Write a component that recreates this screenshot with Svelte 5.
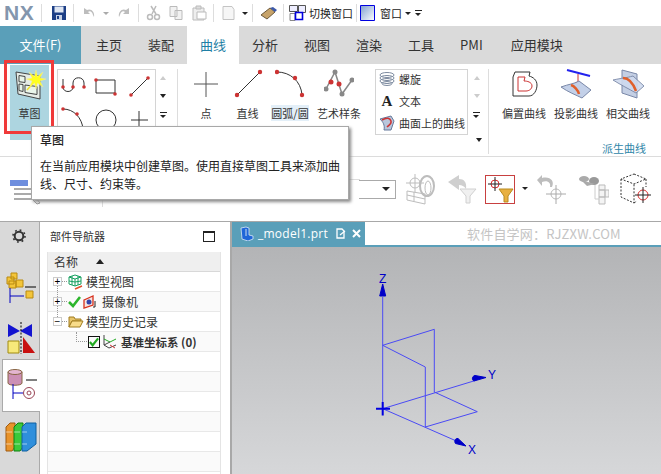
<script>
  const tabs = ['主页','装配','曲线','分析','视图','渲染','工具','PMI','应用模块'];
  const rows = Array.from({length: 10});
</script>

<div class="app">
  <header class="qat">
    <span class="logo">NX</span><i class="sep m4"></i>
    <svg class="m9" width="16" height="16" viewBox="0 0 16 16"><path d="M1 1h14v14H1z" fill="#1d3f86"/><path d="M3.500 1.500h9v6h-9z" fill="#dfe6f2"/><path d="M5 10h6v5H5z" fill="#c9d3e6"/><path d="M6 11h2v3H6z" fill="#1d3f86"/></svg>
    <i class="sep m6"></i>
    <svg class="m7" width="16" height="16" viewBox="0 0 16 16"><path d="M3 3v6h6L7 7c2-1.500 4-.5 5 3l1 2c1-5-3-9-7-7z" fill="#bdbdbd"/></svg>
    <span class="caret light m6"></span>
    <svg class="m7 flip" width="16" height="16" viewBox="0 0 16 16"><path d="M3 3v6h6L7 7c2-1.500 4-.5 5 3l1 2c1-5-3-9-7-7z" fill="#bdbdbd"/></svg>
    <i class="sep m6"></i>
    <svg class="m6" width="16" height="16" viewBox="0 0 16 16"><path d="M11 1 7 9M6 1l5 8" stroke="#bbb" stroke-width="1.500"/><circle cx="5" cy="12" r="2.500" fill="none" stroke="#bbb" stroke-width="1.500"/><circle cx="12" cy="12" r="2.500" fill="none" stroke="#bbb" stroke-width="1.500"/></svg>
    <svg class="m7" width="16" height="16" viewBox="0 0 16 16"><path d="M2 1.500h7v10H2zM7 5.500h7v9H7z" fill="#f2f2f2" stroke="#bbb"/></svg>
    <svg class="m7" width="16" height="16" viewBox="0 0 16 16"><path d="M2 3h11v12H2z" fill="#eee" stroke="#bbb"/><path d="M5 1h5v3H5z" fill="#ddd" stroke="#bbb"/><path d="M6 7h9v7H6z" fill="#fff" stroke="#bbb"/></svg>
    <i class="sep m6"></i>
    <svg class="m6" width="16" height="16" viewBox="0 0 16 16"><path d="M3 1.500h9l2 3v10H3z" fill="#f6f6f6" stroke="#c4c4c4"/></svg>
    <span class="caret m6"></span>
    <i class="sep m4"></i>
    <svg class="m7" width="18" height="14" viewBox="0 0 18 14"><path d="M1 9 10 2l5 4-8 7z" fill="#c7a36a" stroke="#6d5a3c"/><path d="m10 2 3-1 4 3-2 2z" fill="#3d5aa8"/></svg>
    <i class="sep m5"></i>
    <svg class="m5" width="17" height="17" viewBox="0 0 17 17"><path d="M.5.5h8v6h-8zM9.500.5h7v7h-7z" fill="#eef" stroke="#555"/><path d="M1 8.500h5v7H1z" fill="#fff" stroke="#888"/><path d="M6.500 7.500h7v7h-7z" fill="#fff" stroke="#0000e0" stroke-width="1.600"/></svg>
    <span class="qt m3">切换窗口</span>
    <i class="sep m3"></i>
    <svg class="m3" width="15" height="16" viewBox="0 0 15 16"><defs><linearGradient id="win" x1="0" y1="0" x2="1" y2="1"><stop offset="0" stop-color="#7f9fd0"/><stop offset="1" stop-color="#ffffff"/></linearGradient></defs><path d="M.5.500h14v15H.5z" fill="url(#win)" stroke="#0000e0"/></svg>
    <span class="qt m5">窗口</span>
    <span class="caret m3"></span>
    <span class="more m4"></span>
  </header>

  <nav class="tabs">
    <span class="file">文件(F)</span>
    {#each tabs as t}
      <span class="tab" class:active={t === '曲线'}>{t}</span>
    {/each}
  </nav>

  <section class="ribbon">
    <div class="sketch">
      <svg width="32" height="32" viewBox="0 0 32 32"><path d="M2 3 26 7v23L4 25z" fill="#e6ece6" stroke="#444"/><path d="M5 6.500 11 7.500v6l-6-.8zM5 15l4 .5v7L5 21.500zM11 16l12 1.500v8L11 23.500z" fill="#eaf5ea" stroke="#444"/><path d="M13 21 22 11" stroke="#f0e020" stroke-width="1.500"/><path d="m22 1 1.500 6.500L29 3l-3 6 6 1-6 2 3 6-5.500-4-1.500 6-1.500-6-5 4 2.500-6-6-2 6-1-3-6 5.500 4.500z" fill="#ffff20" stroke="#f4e8a0" stroke-width=".5"/></svg>
      <span>草图</span>
    </div>

    <div class="grid">
      <svg viewBox="0 0 33 33"><path d="M5 17c0 6 10 6 10 0v-4c0-7 11-7 11 0v4" fill="none" stroke="#333"/><path d="M5 17V9" stroke="#333"/><circle cx="5" cy="17" r="1.800" fill="#c33"/><circle cx="15" cy="17" r="1.800" fill="#c33"/><circle cx="26" cy="17" r="1.800" fill="#c33"/></svg>
      <svg viewBox="0 0 33 33"><path d="M5 10h19v13H5z" fill="none" stroke="#333"/><circle cx="5" cy="10" r="1.800" fill="#c33"/><circle cx="24" cy="24" r="1.800" fill="#c33"/></svg>
      <svg viewBox="0 0 33 33"><path d="M7 25 24 8" stroke="#333"/><circle cx="7" cy="25" r="1.800" fill="#c33"/><circle cx="24" cy="8" r="1.800" fill="#c33"/></svg>
      <svg viewBox="0 0 33 33"><path d="M5 6c11 0 19 9 20 20" fill="none" stroke="#333"/><circle cx="5" cy="6" r="1.800" fill="#c33"/><circle cx="19" cy="11" r="1.800" fill="#c33"/><circle cx="25" cy="26" r="1.800" fill="#c33"/></svg>
      <svg viewBox="0 0 33 33"><circle cx="15" cy="17" r="10" fill="none" stroke="#333"/></svg>
      <svg viewBox="0 0 33 33"><path d="M15 8v20M7 17h17" stroke="#333"/></svg>
    </div>
    <div class="scroll">
      <span class="up"></span><span class="down"></span><span class="more"></span>
    </div>
    <i class="vsep first"></i>

    <div class="big w42">
      <svg width="30" height="30" viewBox="0 0 30 30"><path d="M15 3v25M3 15h24" stroke="#555"/></svg><span>点</span>
    </div>
    <div class="big w41">
      <svg width="30" height="30" viewBox="0 0 30 30"><path d="M4 26 27 3" stroke="#333"/><circle cx="4" cy="26" r="2.200" fill="#c33"/><circle cx="27" cy="3" r="2.200" fill="#c33"/></svg><span>直线</span>
    </div>
    <div class="big w44">
      <svg width="30" height="30" viewBox="0 0 30 30"><path d="M2 3c13 0 24 9 25 23" fill="none" stroke="#333"/><circle cx="2" cy="3" r="2.200" fill="#c33"/><circle cx="20" cy="9" r="2.200" fill="#c33"/><circle cx="27" cy="26" r="2.200" fill="#c33"/></svg><span class="hl">圆弧/圆</span>
    </div>
    <div class="big w54">
      <svg width="30" height="30" viewBox="0 0 30 30"><path d="M2 20 11 3l7 22 10-14" fill="none" stroke="#888" stroke-width="1.500"/><circle cx="2" cy="20" r="2.500" fill="#888"/><circle cx="11" cy="3" r="2.500" fill="#888"/><circle cx="18" cy="25" r="2.500" fill="#888"/><circle cx="28" cy="11" r="2.500" fill="#888"/><circle cx="7" cy="13" r="2.500" fill="#c33"/><circle cx="15" cy="15" r="2.500" fill="#c33"/></svg><span>艺术样条</span>
    </div>

    <div class="list">
      <div><svg width="16" height="16" viewBox="0 0 16 16"><g fill="none" stroke="#7d8ba0"><ellipse cx="8" cy="4" rx="7" ry="2.500"/><ellipse cx="8" cy="7" rx="7" ry="2.500"/><ellipse cx="8" cy="10" rx="7" ry="2.500"/><ellipse cx="8" cy="12.500" rx="5" ry="2"/></g></svg>螺旋</div>
      <div><span class="glyph">A</span>文本</div>
      <div><svg width="16" height="16" viewBox="0 0 16 16"><path d="M1 4 12 1l3 5-3 9-7 0C6 10 4 7 1 4z" fill="#b9c6dc" stroke="#65799b"/><path d="M3 5c5-3 8-2 9 1s-2 4-4 6" fill="none" stroke="#c33" stroke-width="1.500"/></svg>曲面上的曲线</div>
    </div>
    <div class="scroll second">
      <span class="up"></span><span class="down lt"></span><span class="more"></span><span class="down end"></span>
    </div>
    <i class="vsep"></i>

    <div class="derived">
      <div class="row">
        <div class="big w52">
          <svg width="30" height="30" viewBox="0 0 30 30"><path d="M6 3h15l-1 4c4 1 8 4 8 9 0 5-3 11-8 11H4V8z" fill="#fff" stroke="#333"/><path d="M9 8h7l-1 4c3 0 8 1 8 5 0 3-3 5-6 5H9z" fill="none" stroke="#c33"/></svg><span>偏置曲线</span>
        </div>
        <div class="big w52">
          <svg width="32" height="30" viewBox="0 0 32 30"><path d="M7 1 30 7" stroke="#2222ee" stroke-width="2"/><path d="M18 5v12" stroke="#c33"/><path d="m15 13 3 5 3-5z" fill="#c33"/><path d="M1 18C9 15 14 15 19 12l12 9-9 8C16 26 8 23 1 18z" fill="#c3d0e8" stroke="#7a88a8"/><path d="M11 16c3 1 7 5 8 9" fill="none" stroke="#e0602c" stroke-width="2.500"/></svg><span>投影曲线</span>
        </div>
        <div class="big w52">
          <svg width="32" height="30" viewBox="0 0 32 30"><path d="M10 1 25 5v24L10 24z" fill="#c4cfe4" stroke="#7a88a8"/><path d="M1 11C10 9 14 9 21 7l11 10-8 7C17 20 9 16 1 11z" fill="#cfdaee" stroke="#7a88a8" opacity=".9"/><path d="M11 9c5 0 10 5 13 13" fill="none" stroke="#e0602c" stroke-width="2.500"/></svg><span>相交曲线</span>
        </div>
      </div>
      <span class="group">派生曲线</span>
    </div>
  </section>

  <section class="selbar">
    <svg class="selicon" width="32" height="28" viewBox="0 0 32 28"><path d="M0 1h18v6H0z" fill="#6e8ede"/><path d="M4 10h18M4 15h18M4 20h18" stroke="#aaa" stroke-width="2"/><path d="m24 9 2 10 4 5-3 1-5-5z" fill="#f2f2f2" stroke="#999"/></svg>
    <i class="bar"></i>
    <div class="rule"></div>
    <div class="combo"><span class="caret dark"></span></div>
    <svg class="s1" width="33" height="32" viewBox="0 0 33 32" fill="none" stroke="#bdbdbd"><circle cx="11" cy="10" r="5"/><path d="M11 1v18M2 10h18M3 18l18 3v10L3 27zM10 19v9M3 22l18 4" /><ellipse cx="23" cy="13" rx="7" ry="10" stroke-width="2"/><ellipse cx="24" cy="15" rx="3" ry="7"/></svg>
    <svg class="s2" width="30" height="31" viewBox="0 0 30 31"><path d="M1 8 12 1v4c5 0 8 3 7 10-2-3-4-4-7-4v5z" fill="#cfcfcf"/><path d="M13 15h16l-6 7v7h-4v-7z" fill="#f0f0f0" stroke="#d0d0d0"/></svg>
    <div class="filter"><svg width="28" height="27" viewBox="0 0 28 27"><circle cx="9" cy="8" r="4" fill="none" stroke="#d33"/><path d="M9 1v14M2 8h14" stroke="#222"/><path d="M13 13h14l-5 7v6h-4v-6z" fill="#e8b040" stroke="#b88a20"/></svg></div>
    <span class="caret dark small"></span>
    <svg class="s3" width="32" height="31" viewBox="0 0 32 31"><path d="M16 13c3-6-2-11-10-9V1L1 6l5 6V8c6-2 9 1 8 5z" fill="#bdbdbd"/><circle cx="20" cy="20" r="5" fill="none" stroke="#bbb"/><path d="M20 11v19M10 20h20" stroke="#aaa"/></svg>
    <svg class="s4" width="30" height="31" viewBox="0 0 30 31"><ellipse cx="5" cy="5" rx="5" ry="3" fill="#aaa"/><ellipse cx="15" cy="7" rx="5" ry="4" fill="#999"/><path d="M2 6l6 6 8-2" fill="#aaa"/><path d="M20 11h6v5h-6zM20 16h6v7h-6zM20 23h6v7h-6zM26 16h4v7h-4z" fill="#f4f4f4" stroke="#bbb"/><path d="M16 11v14h4" fill="none" stroke="#ccc"/></svg>
    <svg class="s5" width="34" height="32" viewBox="0 0 34 32"><path d="M15 1 27 6 15 11 2 6zM2 6v18l13 6V11M27 6v8M15 30l3-2" fill="none" stroke="#333" stroke-dasharray="2 1.500"/><circle cx="24" cy="22" r="5" fill="none" stroke="#d33"/><path d="M24 14v16M16 22h16" stroke="#222"/></svg>
  </section>

  <main class="lower">
    <aside class="strip">
      <svg class="gear" width="14" height="14" viewBox="0 0 14 14"><circle cx="7" cy="7" r="4.300" fill="none" stroke="#333" stroke-width="2"/><circle cx="7" cy="7" r="6" fill="none" stroke="#333" stroke-width="1.600" stroke-dasharray="1.800 2.900"/></svg>
      <div class="side s-a"><svg width="30" height="32" viewBox="0 0 30 32"><g fill="#f3c53a" stroke="#b98a10"><path d="M1 5h7v7H1zM5 1h6v6H5zM10 8h7v7h-7zM3 9h7v7H3z"/><path d="M20 19h7v7h-7z"/></g><path d="M4 16v15M4 24h14" stroke="#0000c0" fill="none"/><path d="M19 15h11" stroke="#000"/></svg></div>
      <div class="side s-b"><svg width="28" height="32" viewBox="0 0 28 32"><path d="M1 2 13 9 1 15zM25 2 13 9l12 6z" fill="#1414d0"/><path d="M1 19h11v12H1z" fill="#f7e97a" stroke="#a08a10"/><path d="M16 15 28 31H16z" fill="#c81010"/><path d="M14 0v32" stroke="#000" stroke-dasharray="2 1.500"/></svg></div>
      <div class="side s-c"><svg width="30" height="32" viewBox="0 0 30 32"><path d="M1 3h14v11c0 3-14 3-14 0z" fill="#cc8fb5" stroke="#864"/><ellipse cx="8" cy="3" rx="7" ry="2.500" fill="#e4b5d0" stroke="#864"/><path d="M19 11h11" stroke="#000"/><path d="M6 15v15M6 24h10" stroke="#0000c0" fill="none"/><circle cx="22" cy="24" r="5.500" fill="none" stroke="#945"/><circle cx="22" cy="24" r="2" fill="none" stroke="#945"/></svg></div>
      <div class="side s-d"><svg width="32" height="30" viewBox="0 0 32 30"><path d="M1 5 5 1h5v24l-3 4H1z" fill="#e8932a" stroke="#a05a10"/><path d="M9 5l4-4h5v24l-3 4H9z" fill="#3bc93b" stroke="#108010"/><path d="M17 5l4-4h10v21l-9 7h-5z" fill="#2f8fdc" stroke="#1060a0"/><path d="M1 10h6M1 22h6M9 10h6M9 22h6M17 10h5M17 22h5" stroke="#fff8"/></svg></div>
    </aside>

    <section class="nav">
      <div class="navhead"><span>部件导航器</span><i class="winbtn"></i></div>
      <div class="table">
        <div class="th"><span>名称</span><i class="sort"></i></div>
        <div class="tr">
          <i class="exp link">+</i><span class="dots"></span>
          <svg width="16" height="16" viewBox="0 0 16 16" fill="none" stroke="#18a060"><path d="M7 1 13 3v7l-6 2-6-2V3zM1 3l6 2 6-2M7 5v7M1 7l6 1 6-1M4 2v9M10 2v9"/><path d="m7 15 7-3" stroke="#e0502c" stroke-width="1.500"/></svg>
          <span class="lb">模型视图</span>
        </div>
        <div class="tr">
          <i class="exp link">+</i><span class="dots"></span>
          <svg class="chk" width="13" height="12" viewBox="0 0 13 12"><path d="M1 6 5 10 12 1" fill="none" stroke="#2bb52b" stroke-width="2.600"/></svg>
          <svg class="cam" width="15" height="14" viewBox="0 0 15 14"><path d="M1 5 10 1v9L1 13z" fill="#f4e4e0" stroke="#d8301c" stroke-width="1.300"/><circle cx="6" cy="7" r="2.500" fill="#3344aa"/><path d="M12 6v6h-2" stroke="#222" fill="none"/></svg>
          <span class="lb cam-l">摄像机</span>
        </div>
        <div class="tr">
          <i class="exp">−</i><span class="dots"></span>
          <svg width="16" height="13" viewBox="0 0 16 13"><path d="M1 12V2h5l1 2h6v2H4z" fill="#e8c56a" stroke="#a07c20"/><path d="M4 6h11l-3 6H1z" fill="#f8dc8a" stroke="#a07c20"/></svg>
          <span class="lb">模型历史记录</span>
        </div>
        <div class="tr leaf">
          <span class="elbow"></span>
          <span class="cb"><svg width="11" height="10" viewBox="0 0 11 10"><path d="M1 5 4 8.500 10 1" fill="none" stroke="#22aa22" stroke-width="2.400"/></svg></span>
          <svg class="csys" width="15" height="15" viewBox="0 0 15 15" fill="none"><path d="M1 1v10l5 3 7-3" stroke="#444"/><path d="M1 5l6 3 6-3" stroke="#2a2"/><path d="m7 11 5 3" stroke="#c33"/><path d="M1 11 7 8" stroke="#444"/></svg>
          <b>基准坐标系 (0)</b>
        </div>
        {#each rows as _}<div class="tr"></div>{/each}
      </div>
    </section>

    <section class="gfx">
      <div class="gtabs">
        <div class="gtab">
          <svg width="15" height="15" viewBox="0 0 15 15"><path d="M2 2 7 1l3 1v7l4 1v3l-5 2-6-2z" fill="#1f66d8" stroke="#d8e8f8" stroke-width=".8"/><path d="M7 3v7" stroke="#cde" /></svg>
          <span class="fname">_model1.prt</span>
          <svg width="10" height="11" viewBox="0 0 10 11" class="save"><path d="M1 1h5l2 2v7H1z" fill="none" stroke="#fff" stroke-width="1.300"/><path d="M4 7 9 3" stroke="#fff" stroke-width="1.300"/></svg>
          <svg width="9" height="9" viewBox="0 0 9 9" class="x"><path d="m1 1 7 7M8 1 1 8" stroke="#fff" stroke-width="2"/></svg>
        </div>
        <span class="wm">软件自学网：RJZXW.COM</span>
      </div>
      <div class="canvas">
        <svg width="430" height="229" viewBox="231 245 430 229" fill="none" stroke="#4a4af5">
          <path d="M381.700 406.700V295M381.700 343.300l51.600-16v63M381.700 343.300l42.600 21.700v60M381.700 406.700l92-28M381.700 406.700l73 32M433.300 390l43 19.700-52 15.300" stroke-width="1"/>
          <path d="M375 406.700h14M381.700 400v13.500" stroke="#0000e0" stroke-width="2"/>
          <path d="m381.700 282-3 12h6z" fill="#0000c8" stroke="#0000c8"/>
          <path d="M485 375.500 474 373.500c-3 .5-3.500 4.500-1 5.500z" fill="#0000c8" stroke="#0000c8"/>
          <path d="M465 444 457 436.500c-3-.5-4 3-2.500 5z" fill="#0000c8" stroke="#0000c8"/>
          <text x="378" y="281" class="ax">Z</text>
          <text x="487" y="377" class="ax">Y</text>
          <text x="467" y="452" class="ax">X</text>
        </svg>
      </div>
    </section>
  </main>

  <div class="marker"></div>
  <div class="tip">
    <strong>草图</strong>
    <p>在当前应用模块中创建草图。使用直接草图工具来添加曲线、尺寸、约束等。</p>
  </div>
</div>

<style>
  :global(body) { margin: 0; background: #fff; overflow: hidden; }
  .app { position: relative; width: 661px; height: 474px; overflow: hidden; display: flex; flex-direction: column;
    font-family: "Noto Sans CJK SC", "Open Sans", sans-serif; color: #333; font-size: 11px; }
  i { display: block; font-style: normal; }

  .qat { height: 26px; display: flex; align-items: center; padding-left: 4px; box-sizing: border-box; flex: none; }
  .qat svg { flex: none; }
  .m3 { margin-left: 3px; } .m4 { margin-left: 4px; } .m5 { margin-left: 5px; } .m6 { margin-left: 6px; } .m7 { margin-left: 7px; } .m9 { margin-left: 9px; }
  .logo { font: 700 21px "Liberation Sans", sans-serif; color: #8396ad; width: 33px; letter-spacing: .5px; }
  .sep { width: 1px; height: 18px; background: #ddd; flex: none; }
  .flip { transform: scaleX(-1); }
  .qt { font-size: 11px; color: #222; white-space: nowrap; }
  .caret { width: 0; height: 0; border: 3px solid transparent; border-top: 3px solid #222; border-bottom: 0; flex: none; }
  .caret.light { border-top-color: #aaa; }
  .more { width: 7px; height: 5px; border-top: 1px solid #222; position: relative; display: block; flex: none; }
  .more::after { content: ""; position: absolute; left: 0; top: 2px; width: 0; height: 0; border: 3.500px solid transparent; border-top: 3px solid #222; border-bottom: 0; }

  .tabs { height: 38px; background: #dadada; display: flex; align-items: center; flex: none; }
  .file { width: 81px; height: 38px; background: #5a9fb9; color: #fff; font-size: 13px; line-height: 38px; text-align: center; margin-right: 2px; }
  .tab { padding: 0 13px; font-size: 13px; line-height: 38px; color: #333; }
  .tab:last-child { margin-left: 2px; }
  .tab.active { background: #fff; color: #1f7fa5; }

  .ribbon { height: 93px; box-sizing: border-box; flex: none; display: flex; align-items: flex-start; padding: 1px 0 0 10px; border-bottom: 1px solid #dcdcdc; }
  .sketch { width: 39px; height: 75px; background: #add5e0; flex: none; display: flex; flex-direction: column; align-items: center; padding-top: 4px; box-sizing: border-box; gap: 4px; }
  .grid { width: 99px; height: 66px; margin: 4px 0 0 8px; box-sizing: border-box; border: 1px solid #d4d4d4; display: grid; grid-template-columns: repeat(3, 33px); grid-auto-rows: 33px; flex: none; }
  .grid svg { width: 33px; height: 33px; }
  .scroll { width: 14px; margin-top: 8px; display: flex; flex-direction: column; align-items: center; gap: 14px; padding-top: 3px; flex: none; }
  .up { width: 0; height: 0; border: 3.500px solid transparent; border-bottom: 4px solid #ccc; border-top: 0; }
  .down { width: 0; height: 0; border: 3.500px solid transparent; border-top: 4px solid #222; border-bottom: 0; }
  .down.lt { border-top-color: #ccc; }
  .down.end { margin-top: 6px; margin-left: 4px; }
  .vsep { width: 1px; height: 85px; background: #ddd; margin: 4px 0 0 7px; flex: none; }
  .vsep.first { margin-right: 7px; }
  .big { display: flex; flex-direction: column; align-items: center; gap: 6px; padding-top: 4px; flex: none; color: #333; white-space: nowrap; }
  .big span { line-height: 16px; }
  .w42 { width: 42px; } .w41 { width: 41px; } .w44 { width: 44px; } .w54 { width: 54px; } .w52 { width: 52px; }
  .hl { background: #e3eff8; }
  .list { width: 93px; height: 66px; margin: 4px 0 0 9px; box-sizing: border-box; border: 1px solid #d4d4d4; flex: none; }
  .list div { height: 22px; display: flex; align-items: center; gap: 4px; padding-left: 3px; white-space: nowrap; color: #333; position: relative; top: -2px; }
  .glyph { width: 16px; text-align: center; font: 700 15px "Liberation Serif", serif; color: #222; }
  .scroll.second { width: 17px; gap: 14px; }
  .scroll.second + .vsep { margin-left: 3px; }
  .derived { width: 165px; height: 92px; display: flex; flex-direction: column; flex: none; padding-left: 9px; box-sizing: border-box; }
  .row { display: flex; height: 76px; }
  .group { color: #2f86a8; text-align: right; margin-right: 8px; line-height: 14px; }

  .selbar { height: 64px; flex: none; box-sizing: border-box; display: flex; align-items: center; padding: 0 0 0 10px; position: relative; }
  .selicon { flex: none; margin: 22px 60px 0 0; align-self: flex-start; }
  .bar { width: 1px; height: 28px; background: #ddd; align-self: flex-start; margin-top: 22px; flex: none; }
  .rule { width: 257px; height: 1px; background: #ddd; align-self: flex-start; margin-top: 22px; flex: none; }
  .combo { width: 37px; height: 19px; border: 1px solid #aaa; border-left: 0; margin-left: -1px; box-sizing: border-box; display: flex; align-items: center; justify-content: flex-end; padding-right: 5px; flex: none; }
  .caret.dark { border-width: 4px; border-bottom: 0; }
  .caret.small { border-width: 3px; border-bottom: 0; margin: 0 8px 2px 7px; }
  .s1 { margin-left: 8px; flex: none; } .s2 { margin-left: 10px; flex: none; } .s3 { margin-left: 0; flex: none; } .s4 { margin-left: 11px; flex: none; } .s5 { margin-left: 10px; flex: none; }
  .filter { width: 30px; height: 29px; border: 1px solid #c84040; box-sizing: border-box; margin-left: 8px; flex: none; }

  .lower { flex: 1; min-height: 0; display: flex; border-top: 1px solid #a8a8a8; }
  .strip { width: 40px; background: #d9d9d9; border-right: 1px solid #aaa; box-sizing: border-box; flex: none; display: flex; flex-direction: column; align-items: center; }
  .gear { margin: 7px 0 0 -1px; flex: none; }
  .side { width: 38px; align-self: flex-end; margin-right: -1px; display: flex; justify-content: center; box-sizing: border-box; flex: none; }
  .s-a { margin-top: 29px; height: 50px; }
  .s-b { height: 37px; }
  .s-c { height: 53px; background: #fff; border: 1px solid #aaa; border-right: 0; padding-top: 9px; }
  .s-d { padding-top: 10px; }

  .nav { width: 190px; flex: none; background: #fff; box-sizing: border-box; padding: 0 9px 0 7px; }
  .navhead { height: 30px; display: flex; align-items: center; justify-content: space-between; padding: 0 6px 2px 3px; box-sizing: border-box; font-size: 11px; color: #333; }
  .winbtn { width: 10px; height: 8px; border: 1px solid #222; border-top-width: 2px; }
  .table { border-left: 1px solid #e4e4e4; border-right: 1px solid #e4e4e4; }
  .th { height: 20px; background: #efefef; display: flex; align-items: center; gap: 18px; padding: 0 0 1px 6px; box-sizing: border-box; border-bottom: 1px solid #d8d8d8; font-size: 12px; }
  .sort { width: 0; height: 0; border: 4.500px solid transparent; border-bottom: 5px solid #222; border-top: 0; }
  .tr { height: 20px; box-sizing: border-box; border-bottom: 1px solid #e8e8e8; display: flex; align-items: center; padding: 0 0 0 5px; font-size: 12px; white-space: nowrap; color: #333; }
  .tr:nth-child(odd) { background: #fafafa; }
  .exp { width: 9px; height: 9px; border: 1px solid #ccc; background: #fff; font-size: 10px; line-height: 8px; text-align: center; color: #000; box-sizing: border-box; flex: none; font-family: "Liberation Sans", sans-serif; position: relative; }
  .exp.link::after { content: ""; position: absolute; left: 3px; top: 8px; height: 11px; border-left: 1px dotted #999; }
  .dots { width: 5px; border-top: 1px dotted #999; margin-right: 1px; flex: none; }
  .lb { margin-left: 2px; }
  .chk { margin: 0 2px 0 0; flex: none; }
  .cam { flex: none; }
  .cam-l { margin-left: 4px; }
  .leaf { padding-left: 28px; }
  .elbow { width: 10px; height: 9px; border-left: 1px dotted #999; border-bottom: 1px dotted #999; margin: -9px 0 0 0; flex: none; }
  .cb { width: 12px; height: 12px; border: 1px solid #111; box-sizing: border-box; margin-left: 1px; flex: none; display: flex; align-items: center; justify-content: center; }
  .csys { margin: 0 3px 0 3px; flex: none; }
  .leaf b { font-weight: 700; font-size: 11.500px; }

  .gfx { flex: 1; min-width: 0; display: flex; flex-direction: column; border-left: 2px solid #a8a8a8; }
  .gtabs { height: 23px; flex: none; border-bottom: 2px solid #5a9fb9; display: flex; align-items: center; position: relative; }
  .gtab { width: 133px; height: 23px; background: #5a9fb9; color: #fff; display: flex; align-items: center; padding-left: 7px; box-sizing: border-box; flex: none; font-family: "Open Sans", sans-serif; font-size: 12px; }
  .fname { margin-left: 4px; letter-spacing: .25px; }
  .save { margin-left: 8px; flex: none; }
  .x { margin-left: 6px; flex: none; }
  .wm { margin-left: 102px; color: #c4c4c4; font-size: 13px; white-space: nowrap; letter-spacing: .2px; }
  .canvas { flex: 1; min-height: 0; background: linear-gradient(#b3b4b6, #d6d7d9); overflow: hidden; }
  .canvas svg { display: block; }
  .ax { font: 12px "Liberation Sans", sans-serif; fill: #0000c8; stroke: none; }

  .marker { position: absolute; left: 4px; top: 60px; width: 50px; height: 74px; box-sizing: border-box; border: 3px solid #f03a3a; }
  .tip { position: absolute; left: 31px; top: 126px; width: 318px; height: 74px; box-sizing: border-box; background: #fff; border: 1px solid #a8a8a8; box-shadow: 2px 2px 3px #8a8a8a; padding: 4px 8px; font-size: 12px; color: #222; }
  .tip strong { display: block; font-weight: 500; line-height: 18px; }
  .tip p { margin: 8px 0 0; line-height: 18px; }
</style>
